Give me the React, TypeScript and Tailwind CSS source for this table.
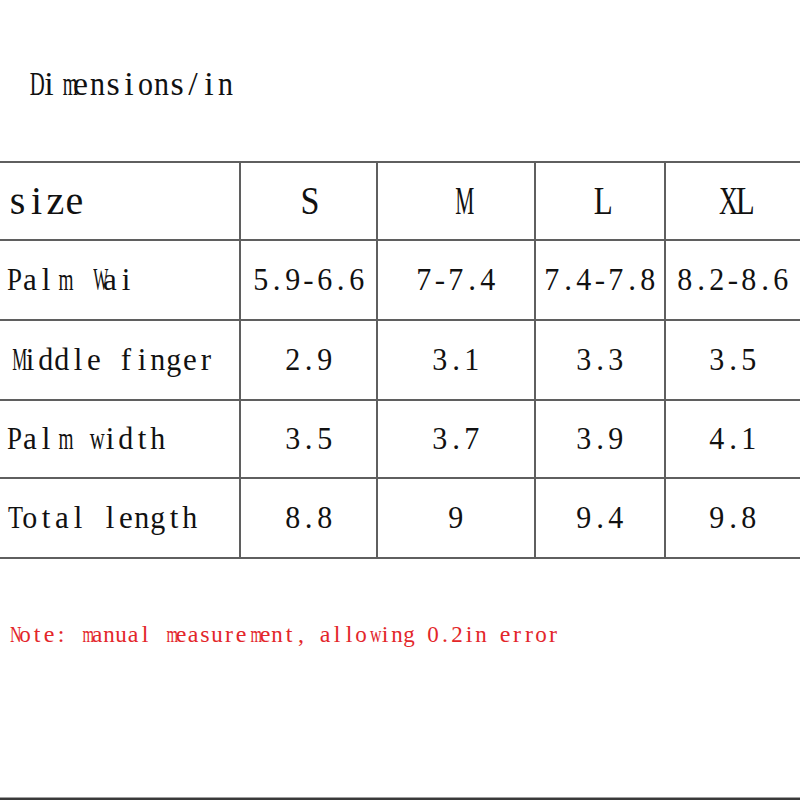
const header = ["size", "S", "M", "L", "XL"];

const rows = [
  { label: "Palm Wai", values: ["5.9-6.6", "7-7.4", "7.4-7.8", "8.2-8.6"], h: "h-[80px]" },
  { label: "Middle finger", values: ["2.9", "3.1", "3.3", "3.5"], h: "h-[80px]" },
  { label: "Palm width", values: ["3.5", "3.7", "3.9", "4.1"], h: "h-[78px]" },
  { label: "Total length", values: ["8.8", "9", "9.4", "9.8"], h: "h-[80px]" },
];

const colWidths = ["w-[240px]", "w-[137px]", "w-[158px]", "w-[130px]", "w-[135px]"];

// Times advance widths (per 1000 em), used to squeeze wide glyphs into a half-width cell
const GLYPH: Record<string, number> = {
  a: 444, b: 500, c: 444, d: 500, e: 444, f: 333, g: 500, h: 500, i: 278, l: 278, m: 778,
  n: 500, o: 500, r: 333, s: 389, t: 278, u: 500, w: 722, z: 444,
  D: 722, L: 611, M: 889, N: 722, P: 556, S: 556, T: 611, W: 944, X: 722,
  ".": 250, "-": 333, "/": 278, ":": 278, ",": 250, " ": 250,
};

function Mono({ text, cell, cellPx, fontPx }: { text: string; cell: string; cellPx: number; fontPx: number }) {
  return (
    <span className="inline-flex whitespace-pre">
      {text.split("").map((ch, i) => {
        const natural = ((GLYPH[ch] ?? 500) / 1000) * fontPx;
        const scale = Math.min(1, (cellPx - 1) / natural);
        return (
          <span key={i} className={`inline-block text-center ${cell}`}>
            <span className="inline-block" style={{ transform: `scaleX(${scale.toFixed(3)})` }}>
              {ch}
            </span>
          </span>
        );
      })}
    </span>
  );
}

export default function App() {
  return (
    <div
      className="relative flex h-[800px] w-[800px] flex-col overflow-hidden bg-white text-[#111]"
      style={{ fontFamily: '"Liberation Serif", "Noto Sans CJK SC", serif' }}
    >
      <div className="h-[161px] pl-[25px] pt-[64px]">
        <p className="text-[34px] leading-[40px]">
          <Mono text="Dimensions/in" cell="w-[16px]" cellPx={16} fontPx={34} />
        </p>
      </div>

      <table className="w-[800px] table-fixed border-collapse">
        <colgroup>
          {colWidths.map((w, i) => (
            <col key={i} className={w} />
          ))}
        </colgroup>
        <tbody>
          <tr className="h-[78px] border-y-2 border-[#5f5f5f]">
            {header.map((h, i) => (
              <td
                key={h}
                className={`p-0 align-middle text-[40px] leading-[44px] ${
                  i === 0 ? "pl-[8px] text-left" : "border-l-2 border-[#5f5f5f] text-center"
                }`}
              >
                <Mono text={h} cell="w-[19px]" cellPx={20} fontPx={40} />
              </td>
            ))}
          </tr>
          {rows.map((row) => (
            <tr key={row.label} className={`${row.h} border-b-2 border-[#5f5f5f]`}>
              <td className="p-0 pl-[6px] text-left align-middle text-[31px] leading-[38px]">
                <Mono text={row.label} cell="w-[16px]" cellPx={16} fontPx={31} />
              </td>
              {row.values.map((v, i) => (
                <td
                  key={i}
                  className="whitespace-nowrap border-l-2 border-[#5f5f5f] p-0 text-center align-middle text-[31px] leading-[38px]"
                >
                  <Mono text={v} cell="w-[16px]" cellPx={16} fontPx={31} />
                </td>
              ))}
            </tr>
          ))}
        </tbody>
      </table>

      <p className="mt-[61px] pl-[7px] text-[24px] leading-[28px] text-[#e3262a]">
        <Mono text="Note: manual measurement, allowing 0.2in error" cell="w-[12px]" cellPx={12.5} fontPx={24} />
      </p>

      <div className="mt-auto h-[3px] border-t border-[#a0a0a0] bg-[#3a3a3a]" />
    </div>
  );
}
